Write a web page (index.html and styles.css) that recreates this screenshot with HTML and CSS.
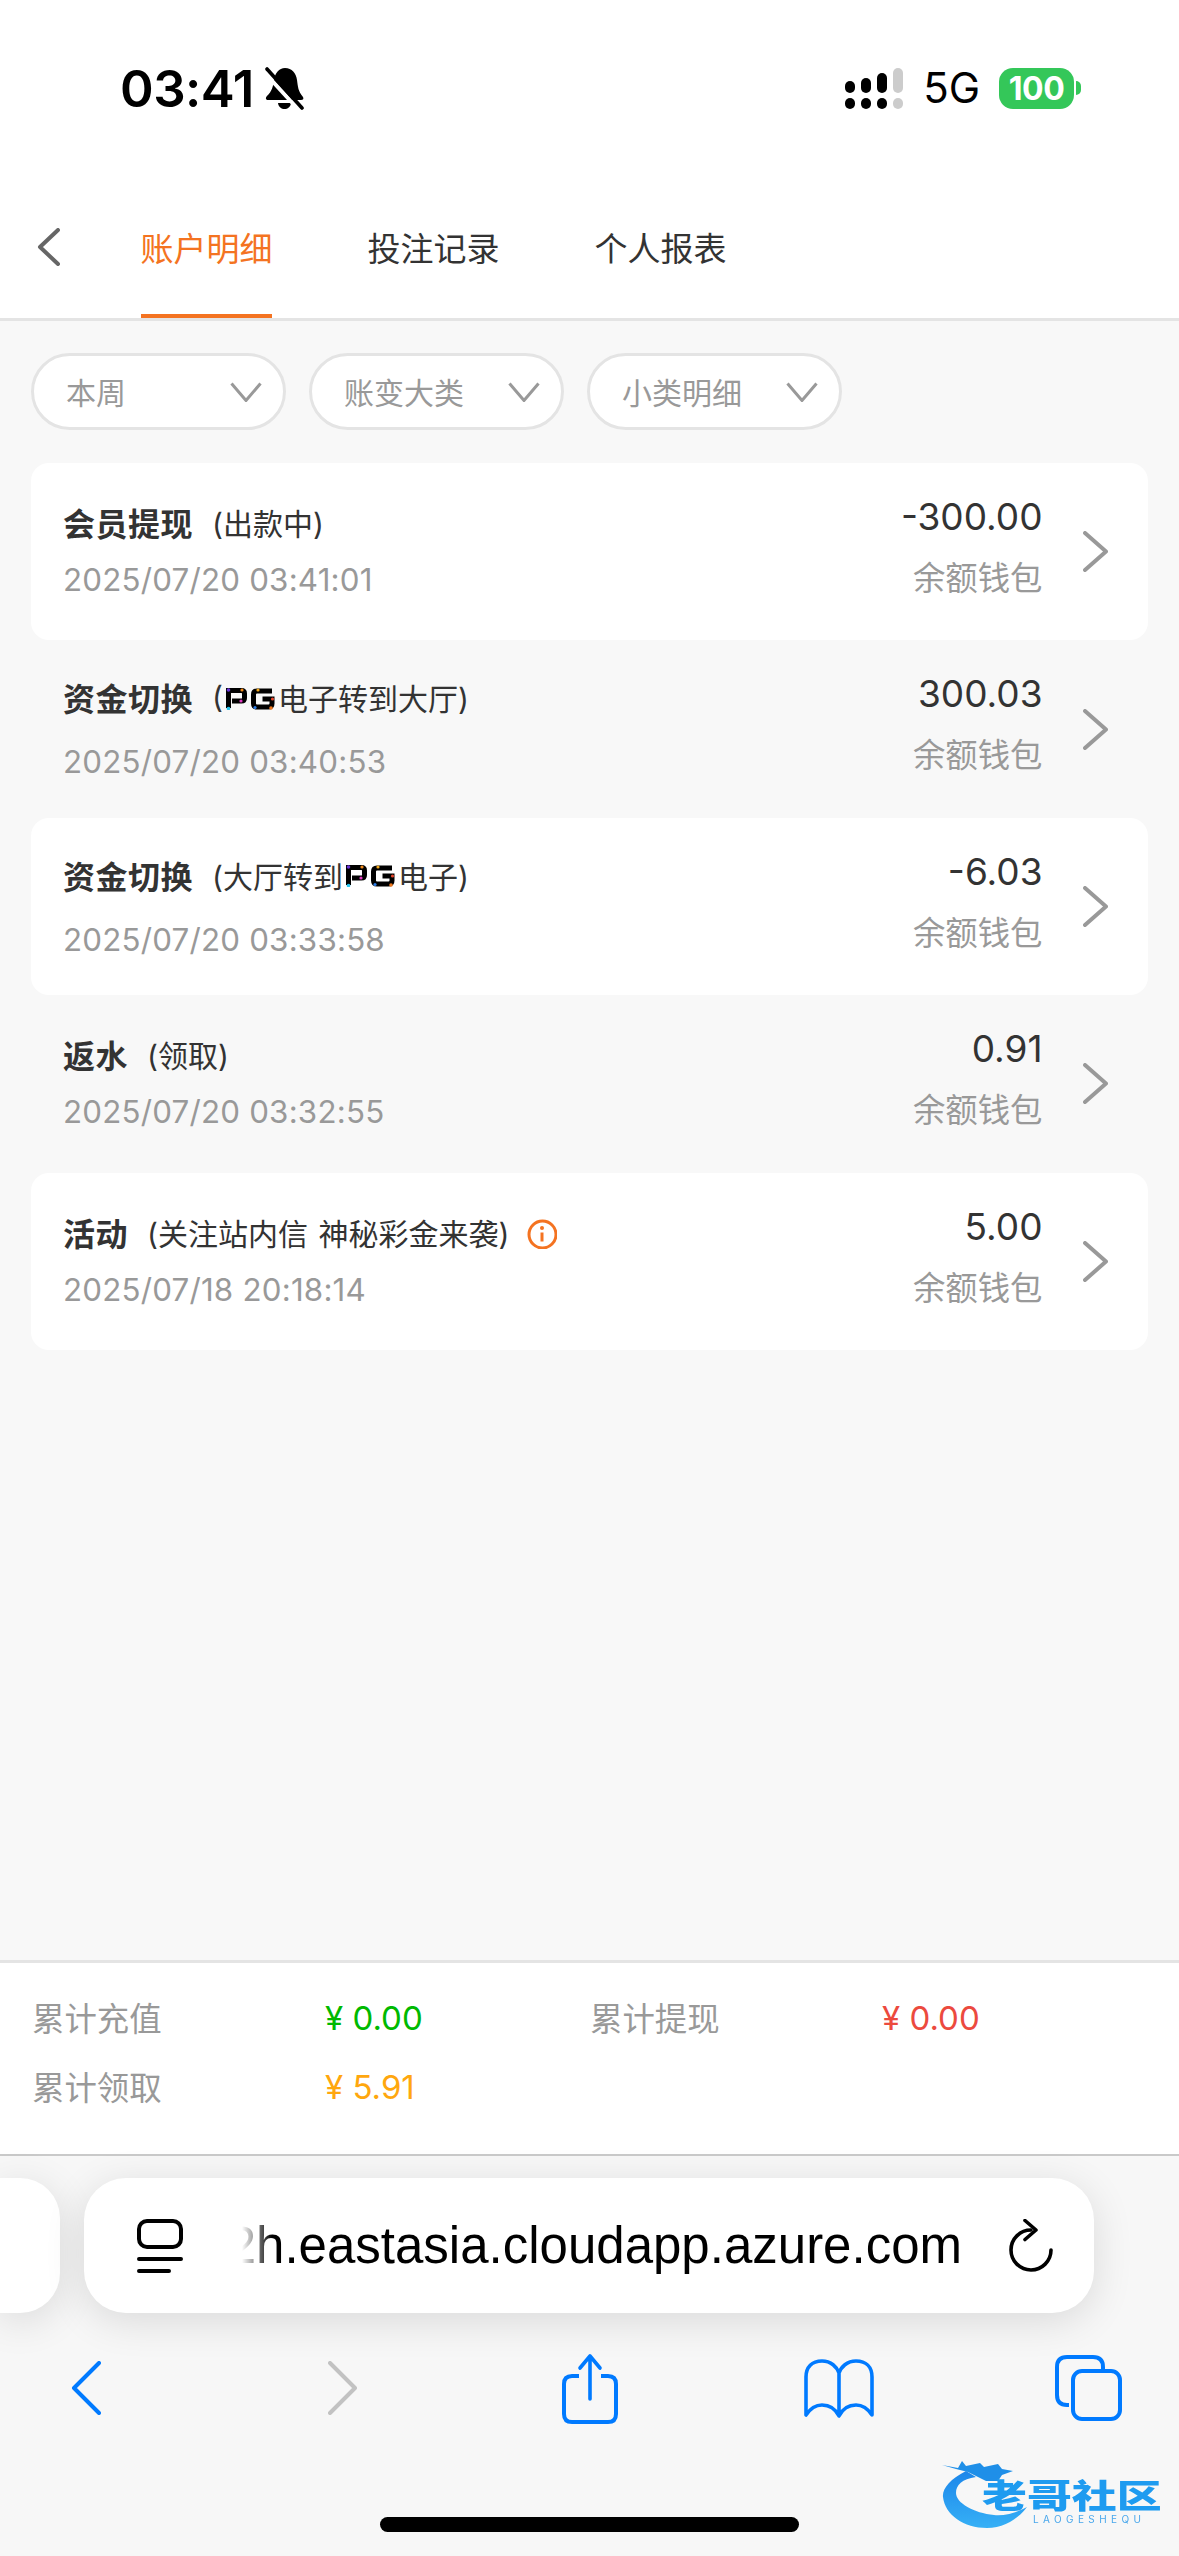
FILE: index.html
```html
<!DOCTYPE html>
<html lang="zh-CN">
<head>
<meta charset="utf-8">
<title>账户明细</title>
<link rel="stylesheet" href="styles.css">
</head>
<body>
<svg class="defs" width="0" height="0" aria-hidden="true">
  <defs>
    <symbol id="pg" viewBox="0 0 49 22">
      <path d="M2.5 20V2.5H15.5Q18.5 2.5 18.5 5.5V10Q18.5 13 15.5 13H6" fill="none" stroke="#000" stroke-width="5"/>
      <path d="M46 3H31Q27.5 3 27.5 6.5V15.5Q27.5 19 31 19H42.5Q46 19 46 15.5V11H36.5" fill="none" stroke="#000" stroke-width="5"/>
      <circle cx="2.5" cy="2" r="1.8" fill="#6a35d8"/><circle cx="16" cy="2" r="1.6" fill="#f08a1d"/>
      <circle cx="15" cy="13" r="1.6" fill="#e23bc3"/><circle cx="2.5" cy="20.5" r="1.8" fill="#27c4ee"/>
      <circle cx="32" cy="2" r="1.6" fill="#f2a81d"/><circle cx="29" cy="19.5" r="1.6" fill="#2b7de9"/>
      <circle cx="46.5" cy="11" r="1.6" fill="#e8452b"/><circle cx="45" cy="20" r="1.8" fill="#f0781d"/>
    </symbol>
    <symbol id="chev-down" viewBox="0 0 32 20"><path d="M1.5 1.5L16 18.5L30.5 1.5" fill="none" stroke="#999" stroke-width="3"/></symbol>
    <symbol id="chev-right" viewBox="0 0 25 41"><path d="M2 2L23 20.5L2 39" fill="none" stroke="#999" stroke-width="4" stroke-linecap="round" stroke-linejoin="round"/></symbol>
    <linearGradient id="logo-arc" x1="0" y1="0" x2="0" y2="1"><stop offset="0" stop-color="#1c86ea"/><stop offset="1" stop-color="#36b0f6"/></linearGradient>
  </defs>
</svg>

<header class="top">
  <div class="status">
    <span class="time">03:41</span>
    <svg class="bell" viewBox="0 0 39 43">
      <path d="M20 1C27 1 31 6 32 13C33 20 33 24 38 30C39 32 38 33 36 33H3C1 33 0 31 2 29C7 24 8 20 9 13C10 6 14 1 20 1Z"/>
      <path d="M13 36H26C25 44 14 44 13 36Z"/>
      <path d="M0 6L32 41" stroke="#fff" stroke-width="4"/>
      <path d="M2 2L37 41" stroke="#000" stroke-width="3.6" stroke-linecap="round"/>
    </svg>
    <div class="status-right">
      <svg class="signal" viewBox="0 0 58 41">
        <rect x="0" y="13" width="10" height="12" rx="5"/><rect x="16" y="10" width="10" height="15" rx="5"/>
        <rect x="32" y="5" width="10" height="20" rx="5"/><rect class="off" x="48" y="0" width="10" height="25" rx="5"/>
        <rect x="0" y="30" width="10" height="11" rx="5"/><rect x="16" y="30" width="10" height="11" rx="5"/>
        <rect x="32" y="30" width="10" height="11" rx="5"/><rect class="off" x="48" y="30" width="10" height="11" rx="5"/>
      </svg>
      <span class="net">5G</span>
      <span class="battery">100</span>
      <span class="nub"></span>
    </div>
  </div>
  <nav class="nav">
    <svg class="back" viewBox="0 0 23 38"><path d="M21 2L3 19L21 36" fill="none" stroke="#666" stroke-width="4" stroke-linecap="round" stroke-linejoin="round"/></svg>
    <a class="tab active">账户明细</a>
    <a class="tab">投注记录</a>
    <a class="tab">个人报表</a>
  </nav>
</header>

<section class="filters">
  <div class="pill"><span>本周</span><svg class="pill-chev"><use href="#chev-down"/></svg></div>
  <div class="pill"><span>账变大类</span><svg class="pill-chev"><use href="#chev-down"/></svg></div>
  <div class="pill"><span>小类明细</span><svg class="pill-chev"><use href="#chev-down"/></svg></div>
</section>

<main class="list">
  <article class="row card">
    <div class="left">
      <div class="title"><b>会员提现</b><span class="sub">(出款中)</span></div>
      <div class="date">2025/07/20 03:41:01</div>
    </div>
    <div class="right"><div class="amount">-300.00</div><div class="wallet">余额钱包</div></div>
    <svg class="go"><use href="#chev-right"/></svg>
  </article>
  <article class="row pg">
    <div class="left">
      <div class="title"><b>资金切换</b><span class="sub">(<svg class="pg-logo"><use href="#pg"/></svg>电子转到大厅)</span></div>
      <div class="date">2025/07/20 03:40:53</div>
    </div>
    <div class="right"><div class="amount">300.03</div><div class="wallet">余额钱包</div></div>
    <svg class="go"><use href="#chev-right"/></svg>
  </article>
  <article class="row card pg">
    <div class="left">
      <div class="title"><b>资金切换</b><span class="sub">(大厅转到<svg class="pg-logo"><use href="#pg"/></svg>电子)</span></div>
      <div class="date">2025/07/20 03:33:58</div>
    </div>
    <div class="right"><div class="amount">-6.03</div><div class="wallet">余额钱包</div></div>
    <svg class="go"><use href="#chev-right"/></svg>
  </article>
  <article class="row">
    <div class="left">
      <div class="title"><b>返水</b><span class="sub">(领取)</span></div>
      <div class="date">2025/07/20 03:32:55</div>
    </div>
    <div class="right"><div class="amount">0.91</div><div class="wallet">余额钱包</div></div>
    <svg class="go"><use href="#chev-right"/></svg>
  </article>
  <article class="row card">
    <div class="left">
      <div class="title"><b>活动</b><span class="sub">(关注站内信 神秘彩金来袭)</span>
        <svg class="info" viewBox="0 0 30 30"><circle cx="15.5" cy="15.5" r="13.5" fill="none" stroke="#f47321" stroke-width="3"/><circle cx="15" cy="9" r="2" fill="#f47321"/><path d="M15 13.5V22.5" stroke="#f47321" stroke-width="3"/></svg>
      </div>
      <div class="date">2025/07/18 20:18:14</div>
    </div>
    <div class="right"><div class="amount">5.00</div><div class="wallet">余额钱包</div></div>
    <svg class="go"><use href="#chev-right"/></svg>
  </article>
</main>

<section class="summary">
  <span class="s-label">累计充值</span><span class="s-val green">¥ 0.00</span>
  <span class="s-label">累计提现</span><span class="s-val red">¥ 0.00</span>
  <span class="s-label">累计领取</span><span class="s-val orange">¥ 5.91</span>
</section>

<footer class="chrome">
  <div class="url-row">
    <div class="prev-card"></div>
    <div class="url-bar">
      <svg class="tab-list" viewBox="0 0 46 54"><rect x="2" y="2" width="42" height="26" rx="8" fill="none" stroke="#000" stroke-width="4"/><path d="M2 40H44M2 52H32" stroke="#000" stroke-width="4" stroke-linecap="round"/></svg>
      <div class="url"><span>2h.eastasia.cloudapp.azure.com</span></div>
      <svg class="reload" viewBox="0 0 44 53"><path d="M22 11A20 20 0 1 0 42 31" fill="none" stroke="#000" stroke-width="3.6" stroke-linecap="round"/><path d="M16 1.5L27 11L16 20.5" fill="none" stroke="#000" stroke-width="3.6" stroke-linecap="round" stroke-linejoin="round"/></svg>
    </div>
  </div>
  <div class="toolbar">
    <svg class="tb tb-back" viewBox="0 0 30 54"><path d="M28 2L3 27L28 52" fill="none" stroke="#007aff" stroke-width="4" stroke-linecap="round" stroke-linejoin="round"/></svg>
    <svg class="tb tb-fwd" viewBox="0 0 30 54"><path d="M2 2L27 27L2 52" fill="none" stroke="#c2c2c2" stroke-width="4" stroke-linecap="round" stroke-linejoin="round"/></svg>
    <svg class="tb tb-share" viewBox="0 0 56 71"><path d="M28 3V46M18 15L28 3L38 15" fill="none" stroke="#007aff" stroke-width="3.6" stroke-linecap="round" stroke-linejoin="round"/><path d="M17 23H10Q2 23 2 31V61Q2 69 10 69H46Q54 69 54 61V31Q54 23 46 23H39" fill="none" stroke="#007aff" stroke-width="4"/></svg>
    <svg class="tb tb-book" viewBox="0 0 70 59"><path d="M2 56V18C2 8 8 2 18 2C27 2 33 8 35 14C37 8 43 2 52 2C62 2 68 8 68 18V56C64 50 58 46 52 46C44 46 38 51 35 57C32 51 26 46 18 46C12 46 6 50 2 56ZM35 14V57" fill="none" stroke="#007aff" stroke-width="3.6" stroke-linejoin="round"/></svg>
    <svg class="tb tb-tabs" viewBox="0 0 67 66"><path d="M14 50H12Q2 50 2 40V12Q2 2 12 2H38Q48 2 48 12V14" fill="none" stroke="#007aff" stroke-width="4"/><rect x="18" y="16" width="47" height="48" rx="9" fill="none" stroke="#007aff" stroke-width="4"/></svg>
  </div>
  <div class="home-bar"></div>
  <div class="logo">
    <svg class="dragon" viewBox="0 0 220 71">
      <path d="M24 14C8 22 0 32 1 40C3 58 22 71 45 71C62 71 76 62 85 50C74 56 62 59 52 58C32 56 14 46 14 36C14 28 20 22 34 20Z" fill="url(#logo-arc)"/>
      <path d="M0 8L16 11L20 4L24 9L38 6L42 10L56 7L60 12L71 14L60 18L56 24L44 24L36 20L26 15L14 12Z" fill="#1f8fe8"/>
    </svg>
    <span class="logo-cn">老哥社区</span>
    <span class="logo-en">LAOGESHEQU</span>
  </div>
</footer>
</body>
</html>
```
FILE: styles.css
```css
* { box-sizing: border-box; }
html, body { margin: 0; padding: 0; }
body {
  width: 1179px;
  height: 2556px;
  overflow: hidden;
  display: flex;
  flex-direction: column;
  background: #f8f8f8;
  font-family: Inter, "Noto Sans CJK SC", sans-serif;
  color: #333;
}
.defs { position: absolute; }

/* status bar + nav */
.top { background: #fff; border-bottom: 3px solid #e4e4e4; }
.status { height: 176px; display: flex; align-items: center; padding-left: 120px; }
.time { font-size: 51px; font-weight: 600; color: #000; letter-spacing: -0.5px; line-height: 1; }
.bell { width: 39px; height: 43px; margin-left: 11px; }
.status-right { margin-left: auto; display: flex; align-items: center; padding-right: 98px; }
.signal { width: 58px; height: 41px; }
.signal .off { fill: #cccccc; }
.net { font-size: 42px; font-weight: 400; color: #000; margin-left: 20px; line-height: 1; }
.battery {
  width: 75px; height: 41px; margin-left: 19px; border-radius: 14px;
  background: #34c759; color: #fff; font-size: 32px; font-weight: 700;
  display: flex; align-items: center; justify-content: center; letter-spacing: -0.5px;
}
.nub { width: 5px; height: 14px; margin-left: 2px; background: #34c759; border-radius: 0 7px 7px 0; }

.nav { height: 142px; display: flex; align-items: stretch; padding-left: 37px; }
.back { width: 23px; height: 38px; align-self: center; margin-right: 81px; }
.tab {
  width: 131px; margin-right: 96px; display: flex; align-items: center; justify-content: center;
  font-size: 33px; color: #333; white-space: nowrap; border-bottom: 4px solid transparent; padding-top: 4px;
}
.tab.active { color: #f47321; border-bottom-color: #f47321; }

/* filters */
.filters { display: flex; gap: 23px; padding: 32px 0 0 31px; }
.pill {
  width: 255px; height: 77px; border: 3px solid #e4e4e4; border-radius: 39px; background: #fff;
  display: flex; align-items: center; justify-content: space-between; padding: 0 21px 2px 32px;
  font-size: 30px; color: #999;
}
.pill-chev { width: 32px; height: 20px; margin-top: 2px; }

/* list */
.list { flex: 1; margin: 33px 31px 0; }
.row { height: 177.4px; display: flex; padding-left: 32px; border-radius: 18px; }
.row.card { background: #fff; }
.left { flex: 1; padding-top: 37px; min-width: 0; }
.title { height: 44px; display: flex; align-items: center; white-space: nowrap; }
.title b { font-size: 32px; font-weight: 700; color: #333; letter-spacing: 0.5px; }
.sub { font-size: 30px; color: #333; margin-left: 19px; display: flex; align-items: center; white-space: pre; word-spacing: 2px; }
.date { height: 44px; margin-top: 14px; line-height: 44px; font-size: 31.3px; color: #999; letter-spacing: 0.2px; }
.row.pg .left { padding-top: 35px; }
.row.pg .date { margin-top: 21px; }
.pg-logo { width: 49px; height: 22px; margin: 3px 3px 0 3px; }
.info { width: 30px; height: 30px; margin-left: 18px; margin-top: 4px; }
.right { width: 162px; padding-top: 32px; text-align: right; }
.amount { height: 44px; line-height: 44px; font-size: 37px; color: #333; }
.wallet { height: 44px; margin-top: 18px; line-height: 44px; font-size: 32.4px; color: #999; white-space: nowrap; }
.go { width: 25px; height: 41px; align-self: center; margin: 0 40px 0 40.5px; }

/* summary */
.summary {
  background: #fff; border-top: 3px solid #e4e4e4; height: 194px;
  padding: 31px 0 0 32px; display: grid;
  grid-template-columns: 293px 265px 292px 1fr; grid-auto-rows: 44px; row-gap: 25px; align-items: center;
}
.s-label { font-size: 32.4px; color: #999; }
.s-val { font-size: 33px; margin-top: 3px; }
.green { color: #00b900; }
.red { color: #ec4a3e; }
.orange { color: #ffa70e; }

/* browser chrome */
.chrome { position: relative; height: 402px; background: #f7f7f7; border-top: 2px solid #c9c9c9; }
.url-row { display: flex; gap: 24px; padding-top: 22px; }
.prev-card { width: 60px; height: 135px; background: #fff; border-radius: 0 40px 40px 0; box-shadow: 0 8px 40px rgba(0,0,0,.12); }
.url-bar {
  width: 1010px; height: 135px; background: #fff; border-radius: 42px; box-shadow: 0 8px 40px rgba(0,0,0,.12);
  display: flex; align-items: center; padding-left: 53px;
}
.tab-list { width: 46px; height: 54px; }
.url {
  width: 720px; margin-left: 59px; overflow: hidden; direction: rtl; white-space: nowrap;
  font-family: "Liberation Sans", Arial, sans-serif; font-size: 51px; color: #000; line-height: 70px;
  -webkit-mask-image: linear-gradient(to right, transparent 0, #000 30px);
  mask-image: linear-gradient(to right, transparent 0, #000 30px);
}
.url span { direction: ltr; unicode-bidi: bidi-override; display: inline-block; }
.reload { width: 44px; height: 53px; margin-left: 47px; }

.toolbar { display: flex; align-items: center; height: 74px; margin-top: 38px; padding-left: 71px; }
.tb { display: block; }
.tb-back { width: 30px; height: 54px; }
.tb-fwd { width: 30px; height: 54px; margin-left: 227px; }
.tb-share { width: 56px; height: 71px; margin-left: 204px; }
.tb-book { width: 70px; height: 59px; margin-left: 186px; }
.tb-tabs { width: 67px; height: 66px; margin-left: 181px; }
.home-bar { width: 419px; height: 15px; margin: 92px 0 0 380px; background: #000; border-radius: 8px; }

.logo { position: absolute; left: 942px; top: 301px; width: 220px; height: 71px; filter: blur(.7px); }
.dragon { position: absolute; left: 0; top: 0; width: 220px; height: 71px; }
.logo-cn {
  position: absolute; left: 40px; top: 20px; width: 133px; font-size: 33px; line-height: 38px; font-weight: 900;
  color: #1e9bf0; white-space: nowrap; transform: scaleX(1.36); transform-origin: left center;
}
.logo-en { position: absolute; left: 91px; top: 56px; font-size: 10px; letter-spacing: 4.4px; line-height: 12px; color: #4aa8ec; white-space: nowrap; }
```
